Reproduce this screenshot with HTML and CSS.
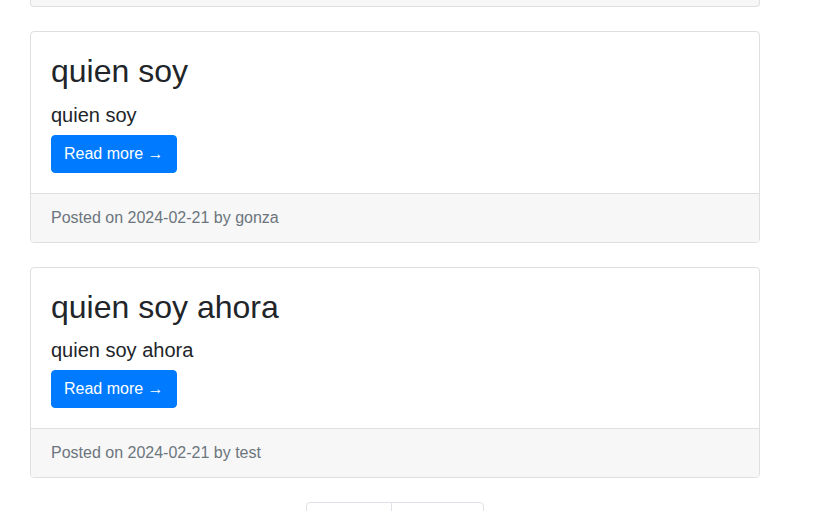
FILE: index.html
```html
<!DOCTYPE html>
<html lang="es">
<head>
<meta charset="utf-8">
<title>Blog</title>
<link rel="stylesheet" href="styles.css">
</head>
<body>
<div class="column">
  <div class="card card-cut"></div>

  <div class="card">
    <div class="card-body">
      <h2 class="card-title">quien soy</h2>
      <h5 class="card-text">quien soy</h5>
      <a class="btn" href="#">Read more &rarr;</a>
    </div>
    <div class="card-footer">Posted on 2024-02-21 by gonza</div>
  </div>

  <div class="card">
    <div class="card-body">
      <h2 class="card-title">quien soy ahora</h2>
      <h5 class="card-text">quien soy ahora</h5>
      <a class="btn" href="#">Read more &rarr;</a>
    </div>
    <div class="card-footer">Posted on 2024-02-21 by test</div>
  </div>

  <ul class="pagination">
    <li class="page-item"><a class="page-link" href="#">&larr; Older</a></li>
    <li class="page-item"><a class="page-link" href="#">Newer &rarr;</a></li>
  </ul>
</div>
</body>
</html>
```

FILE: styles.css
```css
html, body {
  margin: 0;
  padding: 0;
  background: #fff;
}
body {
  font-family: "Liberation Sans", Arial, sans-serif;
  font-size: 16px;
  line-height: 1.5;
  color: #212529;
  overflow: hidden;
}
.column {
  width: 730px;
  margin-left: 30px;
}
.card {
  border: 1px solid #dfdfdf;
  border-radius: 4px;
  background: #fff;
  margin-bottom: 24px;
  overflow: hidden;
}
.card-cut {
  height: 6.2px;
  border-top: none;
  border-radius: 0 0 4px 4px;
  background: #f7f7f7;
}
.card-body {
  padding: 20px;
}
.card-title {
  margin: 0 0 12px;
  font-size: 32px;
  font-weight: 500;
  line-height: 1.2;
}
.card-text {
  margin: 0 0 8px;
  font-size: 20px;
  font-weight: 500;
  line-height: 1.2;
}
.btn {
  display: inline-block;
  padding: 6px 12px;
  border: 1px solid #007bff;
  border-radius: 4px;
  background: #007bff;
  color: #fff;
  text-decoration: none;
  font-size: 16px;
  line-height: 24px;
}
.card-footer {
  padding: 12px 20px;
  background: #f7f7f7;
  border-top: 1px solid #dfdfdf;
  color: #6c757d;
  line-height: 24px;
}
.pagination {
  display: flex;
  justify-content: center;
  list-style: none;
  margin: 0;
  padding: 0;
}
.page-link {
  display: block;
  padding: 8px 12px;
  border: 1px solid #dee2e6;
  color: #007bff;
  text-decoration: none;
  line-height: 20px;
}
.page-item:first-child .page-link {
  border-radius: 4px 0 0 4px;
}
.page-item:last-child .page-link {
  margin-left: -1px;
  border-radius: 0 4px 4px 0;
  color: #6c757d;
}
```
